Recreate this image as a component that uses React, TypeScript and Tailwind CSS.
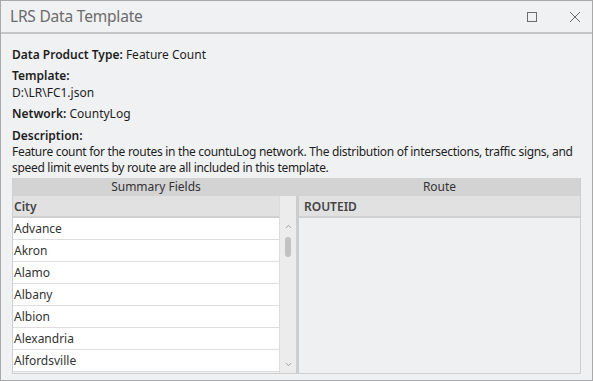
import { ChevronUp, ChevronDown } from 'lucide-react';

const cities = ['Advance', 'Akron', 'Alamo', 'Albany', 'Albion', 'Alexandria', 'Alfordsville'];

export default function App() {
    return (
        <div className="w-[593px] h-[381px] bg-[#f0f1f2] border border-[#a9a9a9] flex flex-col text-[#1e1e1e] font-['Noto_Sans',sans-serif] overflow-hidden">
            {/* Title bar */}
            <div className="h-[33px] flex items-center justify-between border-b-2 border-[#c6c6c6] pl-[9px] pr-[10px] shrink-0">
                <span className="text-[15.5px] text-[#6b6b6b] tracking-[-0.2px]">LRS Data Template</span>
                <div className="flex items-center gap-[32px] text-[#6b6b6b]">
                    <div className="w-[10px] h-[10px] border border-[#6b6b6b]" />
                    <svg width="12" height="12" viewBox="0 0 12 12" className="mr-[1px]">
                        <path d="M1 1 L11 11 M11 1 L1 11" stroke="#6b6b6b" strokeWidth="1" />
                    </svg>
                </div>
            </div>

            {/* Body */}
            <div className="flex flex-col px-[11px] pt-[13px] text-[12px] leading-[16px] flex-1 min-h-0">
                <div className="mb-[5px]"><b className="font-semibold">Data Product Type:</b> Feature Count</div>
                <div className="font-semibold">Template:</div>
                <div className="mb-[5px] mt-[1px]">D:\LR\FC1.json</div>
                <div className="mb-[6px]"><b className="font-semibold">Network:</b> CountyLog</div>
                <div className="font-semibold">Description:</div>
                <div className="mb-[2px] tracking-[-0.3px]">
                    Feature count for the routes in the countuLog network. The distribution of intersections, traffic signs, and speed limit events by route are all included in this template.
                </div>

                {/* Table */}
                <div className="flex-1 min-h-0 mb-[6px] flex flex-col border border-[#cfcfcf] border-t-0">
                    <div className="flex h-[18px] bg-[#d3d3d3] text-[#333] shrink-0">
                        <div className="w-[286px] text-center leading-[18px]">Summary Fields</div>
                        <div className="flex-1 text-center leading-[18px]">Route</div>
                    </div>
                    <div className="flex flex-1 min-h-0">
                        {/* Summary fields */}
                        <div className="w-[286px] flex border-r-[3px] border-[#cdcdcd]">
                            <div className="flex-1 flex flex-col">
                                <div className="h-[22px] bg-[#e1e1e1] border-b-2 border-[#d0d0d0] pl-[1px] font-semibold text-[#444] leading-[22px]">City</div>
                                {cities.map(c => (
                                    <div key={c} className="h-[22px] bg-white border-b border-[#dedede] pl-[1px] leading-[21px] text-[#333]">{c}</div>
                                ))}
                            </div>
                            <div className="w-[17px] bg-[#ececec] border-l border-[#dcdcdc] flex flex-col items-center pt-[26px] pb-[4px] text-[#8a8a8a]">
                                <ChevronUp size={9} strokeWidth={2} />
                                <div className="w-[6px] h-[20px] rounded-full bg-[#c2c2c2] mt-[6px]" />
                                <div className="flex-1" />
                                <ChevronDown size={9} strokeWidth={2} />
                            </div>
                        </div>
                        {/* Route */}
                        <div className="flex-1 flex flex-col bg-[#eff0f1]">
                            <div className="h-[22px] bg-[#e1e1e1] border-b-2 border-[#d0d0d0] pl-[5px] font-semibold text-[#444] leading-[22px]">ROUTEID</div>
                        </div>
                    </div>
                </div>
            </div>
        </div>
    );
}
